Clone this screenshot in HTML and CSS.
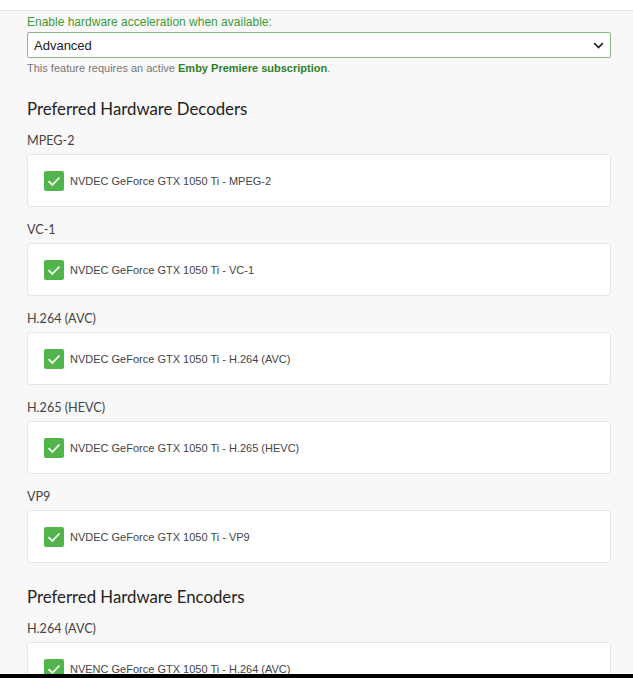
FILE: index.html
```html
<!DOCTYPE html>
<html lang="en">
<head>
  <meta charset="UTF-8">
  <title>Transcoding</title>
  <link rel="stylesheet" href="styles.css">
</head>
<body>

  <div class="topbar"></div>

  <div class="page">
    <!-- hardware acceleration -->
    <div class="field">
      <label class="field-label">Enable hardware acceleration when available:</label>
      <div class="select">
        <span>Advanced</span>
        <svg class="chevron" width="11" height="7" viewBox="0 0 11 7"><path d="M1.2 1.2 L5.5 5.5 L9.8 1.2" fill="none" stroke="#222" stroke-width="1.7"/></svg>
      </div>
      <div class="field-desc">This feature requires an active <b>Emby Premiere subscription</b>.</div>
    </div>

    <h2>Preferred Hardware Decoders</h2>

    <div class="codec">
      <div class="codec-title">MPEG-2</div>
      <div class="card">
        <span class="check"><svg width="20" height="20" viewBox="0 0 20 20"><path d="M4.5 10.2 L8.3 14 L15.5 6.5" fill="none" stroke="#fff" stroke-width="1.8"/></svg></span>
        NVDEC GeForce GTX 1050 Ti - MPEG-2
      </div>
    </div>

    <div class="codec">
      <div class="codec-title">VC-1</div>
      <div class="card">
        <span class="check"><svg width="20" height="20" viewBox="0 0 20 20"><path d="M4.5 10.2 L8.3 14 L15.5 6.5" fill="none" stroke="#fff" stroke-width="1.8"/></svg></span>
        NVDEC GeForce GTX 1050 Ti - VC-1
      </div>
    </div>

    <div class="codec">
      <div class="codec-title">H.264 (AVC)</div>
      <div class="card">
        <span class="check"><svg width="20" height="20" viewBox="0 0 20 20"><path d="M4.5 10.2 L8.3 14 L15.5 6.5" fill="none" stroke="#fff" stroke-width="1.8"/></svg></span>
        NVDEC GeForce GTX 1050 Ti - H.264 (AVC)
      </div>
    </div>

    <div class="codec">
      <div class="codec-title">H.265 (HEVC)</div>
      <div class="card">
        <span class="check"><svg width="20" height="20" viewBox="0 0 20 20"><path d="M4.5 10.2 L8.3 14 L15.5 6.5" fill="none" stroke="#fff" stroke-width="1.8"/></svg></span>
        NVDEC GeForce GTX 1050 Ti - H.265 (HEVC)
      </div>
    </div>

    <div class="codec">
      <div class="codec-title">VP9</div>
      <div class="card">
        <span class="check"><svg width="20" height="20" viewBox="0 0 20 20"><path d="M4.5 10.2 L8.3 14 L15.5 6.5" fill="none" stroke="#fff" stroke-width="1.8"/></svg></span>
        NVDEC GeForce GTX 1050 Ti - VP9
      </div>
    </div>

    <h2 class="second">Preferred Hardware Encoders</h2>

    <div class="codec">
      <div class="codec-title">H.264 (AVC)</div>
      <div class="card">
        <span class="check"><svg width="20" height="20" viewBox="0 0 20 20"><path d="M4.5 10.2 L8.3 14 L15.5 6.5" fill="none" stroke="#fff" stroke-width="1.8"/></svg></span>
        NVENC GeForce GTX 1050 Ti - H.264 (AVC)
      </div>
    </div>
  </div>

  <div class="bottombar"></div>

</body>
</html>
```

FILE: styles.css
```css
html, body {
  margin: 0;
  height: 100%;
  overflow: hidden;
}
body {
  background: #f8f8f8;
  font-family: "Liberation Sans", Arial, sans-serif;
  color: #333;
  position: relative;
}
.topbar {
  height: 10px;
  background: #fff;
  border-bottom: 1px solid #e6e6e6;
}
.page {
  padding: 4px 22px 0 27px;
}
.field-label {
  display: block;
  font-size: 12px;
  color: #3f9a3a;
  line-height: 14px;
  margin-bottom: 3px;
}
.select {
  height: 24px;
  border: 1px solid #86bd80;
  border-radius: 2px;
  background: #fff;
  display: flex;
  align-items: center;
  justify-content: space-between;
  padding: 0 6px 0 6px;
  font-size: 13px;
  color: #222;
}
.chevron {
  display: block;
}
.field-desc {
  font-size: 11px;
  color: #777;
  margin-top: 4px;
  line-height: 13px;
}
.field-desc b {
  color: #2f7f2b;
}
h2 {
  font-family: Lato, "Noto Sans", sans-serif;
  font-weight: 400;
  font-size: 16.8px;
  color: #222;
  margin: 22px 0 0;
  line-height: 24px;
}
h2.second {
  margin-top: 22px;
}
.codec {
  margin-top: 11px;
}
.codec + .codec {
  margin-top: 14px;
}
.codec-title {
  font-family: Lato, "Noto Sans", sans-serif;
  font-size: 12.6px;
  color: #444;
  line-height: 18px;
  margin-bottom: 4px;
}
.card {
  height: 51px;
  background: #fff;
  border: 1px solid #e6e6e6;
  border-radius: 3px;
  display: flex;
  align-items: center;
  padding-left: 16px;
  font-size: 11px;
  color: #444;
}
.check {
  width: 20px;
  height: 20px;
  background: #52b54b;
  border-radius: 2px;
  margin-right: 6px;
  display: flex;
}
.bottombar {
  position: absolute;
  left: 0;
  right: 0;
  bottom: 0;
  height: 4px;
  background: #000;
}
```
